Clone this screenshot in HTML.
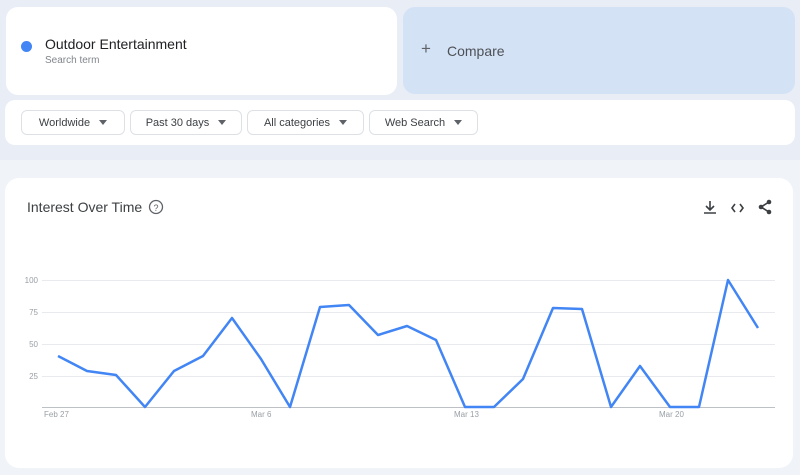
<!DOCTYPE html>
<html><head><style>
*{margin:0;padding:0;box-sizing:border-box}
body{width:800px;height:475px;background:#f0f4f9;font-family:"Liberation Sans",Arial,sans-serif;position:relative;overflow:hidden}
.top{position:absolute;left:0;top:0;width:800px;height:160px;background:#e8edf6}
.card{position:absolute;background:#fff;border-radius:12px}
.chip{position:absolute;top:110px;height:25px;border:1px solid #dde1e6;border-radius:6px;font-size:11px;color:#3c4043;display:flex;align-items:center;justify-content:center}
.chip:after{content:"";margin-left:9px;border-left:4px solid transparent;border-right:4px solid transparent;border-top:5px solid #5f6368}
</style></head><body>
<div class="top"></div>
<div class="card" style="left:6px;top:7px;width:391px;height:88px;">
 <div style="position:absolute;left:15px;top:34px;width:11px;height:11px;border-radius:50%;background:#4285f4"></div>
 <div style="position:absolute;left:39px;top:29px;font-size:14px;color:#202124">Outdoor Entertainment</div>
 <div style="position:absolute;left:39px;top:48px;font-size:10px;color:#80868b">Search term</div>
</div>
<div style="position:absolute;left:403px;top:7px;width:392px;height:87px;background:#d3e2f5;border-radius:12px">
 <div style="position:absolute;left:18px;top:33px;font-size:17px;color:#5f6368;line-height:18px">+</div>
 <div style="position:absolute;left:44px;top:36px;font-size:14px;color:#4d5156">Compare</div>
</div>
<div class="card" style="left:5px;top:100px;width:790px;height:45px;border-radius:10px"></div>
<div class="chip" style="left:21px;width:104px">Worldwide</div>
<div class="chip" style="left:130px;width:112px">Past 30 days</div>
<div class="chip" style="left:247px;width:117px">All categories</div>
<div class="chip" style="left:369px;width:109px">Web Search</div>
<div class="card" style="left:5px;top:178px;width:788px;height:290px;border-radius:14px"></div>
<div style="position:absolute;left:27px;top:199px;font-size:14px;color:#3c4043">Interest Over Time</div>
<svg style="position:absolute;left:0;top:0" width="800" height="475">
 <circle cx="156" cy="207" r="6.5" fill="none" stroke="#5f6368" stroke-width="1.3"/>
 <text x="156" y="211" font-size="9" text-anchor="middle" fill="#5f6368" font-family="Liberation Sans">?</text>
 <g stroke="#3c4043" stroke-width="1.6" fill="none">
  <path d="M710 201v9M706 206l4 4 4-4M704 213h12"/>
  <path d="M735 204l-3 4 3 4M740 204l3 4-3 4"/>
  <path d="M769 202l-8 5 8 5"/>
 </g>
 <g fill="#3c4043"><circle cx="769" cy="202" r="2.3"/><circle cx="761" cy="207" r="2.3"/><circle cx="769" cy="212" r="2.3"/></g>
 <g stroke="#e8eaed" stroke-width="1">
  <line x1="42" y1="280.5" x2="775" y2="280.5"/><line x1="42" y1="312.5" x2="775" y2="312.5"/><line x1="42" y1="344.5" x2="775" y2="344.5"/><line x1="42" y1="376.5" x2="775" y2="376.5"/>
 </g>
 <line x1="42" y1="407.5" x2="775" y2="407.5" stroke="#bdc1c6"/>
 <g font-size="8" fill="#9aa0a6" font-family="Liberation Sans">
  <text x="38" y="283" text-anchor="end">100</text><text x="38" y="315" text-anchor="end">75</text><text x="38" y="347" text-anchor="end">50</text><text x="38" y="379" text-anchor="end">25</text>
  <text x="44" y="417">Feb 27</text><text x="251" y="417">Mar 6</text><text x="454" y="417">Mar 13</text><text x="659" y="417">Mar 20</text>
 </g>
 <polyline fill="none" stroke="#4285f4" stroke-width="2.5" stroke-linejoin="round" points="58,356 87,371 116,375 145,407 174,371 203,356 232,318 261,359 290,407 320,307 349,305 378,335 407,326 436,340 465,407 494,407 523,379 553,308 582,309 611,407 640,366 670,407 699,407 728,280 758,328"/>
</svg>
</body></html>
